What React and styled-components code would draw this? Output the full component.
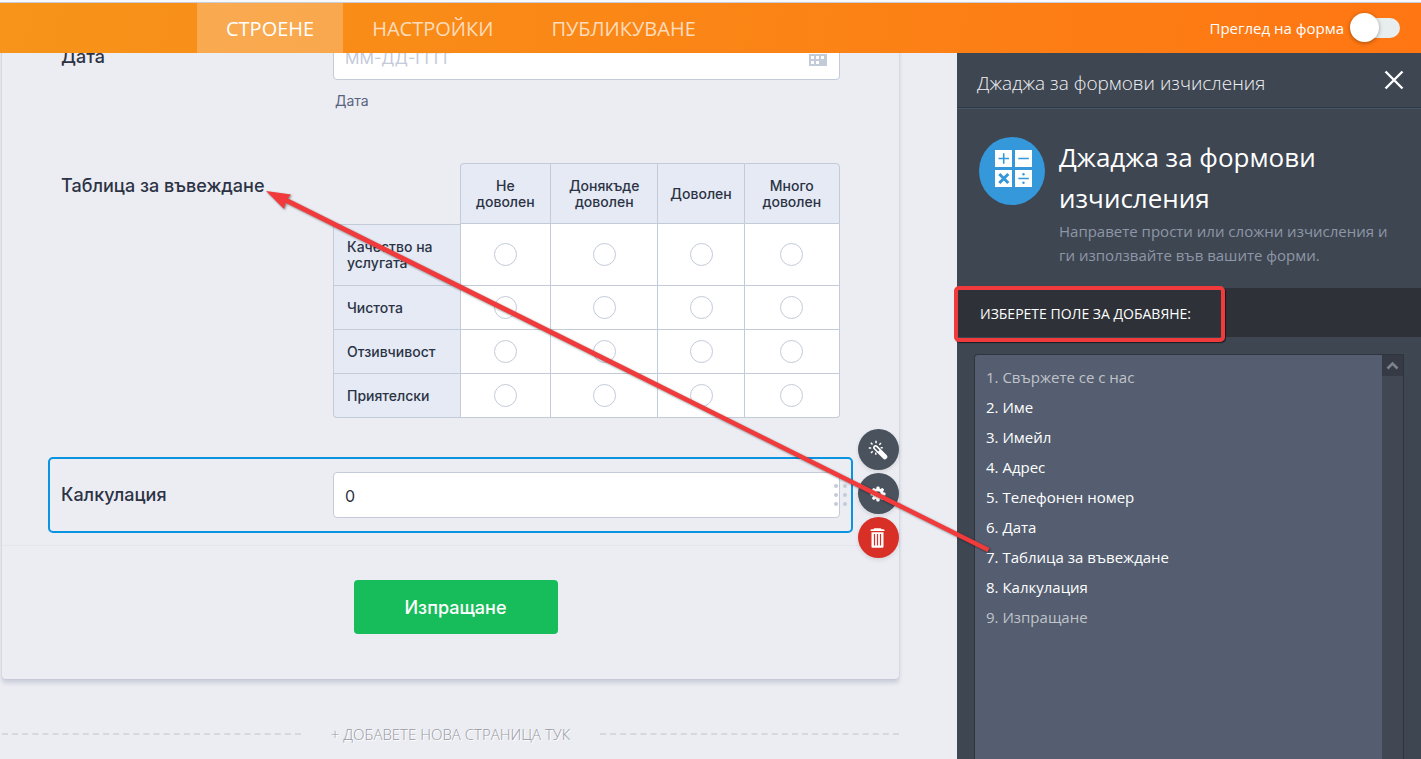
import React from "react";
import styled, { createGlobalStyle } from "styled-components";

const GlobalStyle = createGlobalStyle`
  * {
    box-sizing: border-box;
  }

  body {
    margin: 0;
    background: #ecedf3;
    font-family: "Open Sans", "Noto Sans", sans-serif;
  }

  button,
  input {
    font-family: inherit;
  }
`;

const Page = styled.div`
  position: relative;
  display: flex;
  flex-direction: column;
  height: 100vh;
  border-top: 2px solid #f8f9fc;
  overflow: hidden;
`;

const Header = styled.header`
  display: flex;
  flex: none;
  align-items: stretch;
  justify-content: space-between;
  height: 51px;
  padding-right: 21px;
  border-top: 1px solid #c9cdd8;
  background: linear-gradient(100deg, #f79419, #ff7613) padding-box;
`;

const Tabs = styled.nav`
  display: flex;
  padding-left: 197px;
`;

const Tab = styled.a`
  display: flex;
  align-items: center;
  padding: 0 29px;
  font-size: 20px;
  text-decoration: none;
  color: ${(props) => (props.$active ? "#fff" : "#fddcbb")};
  background: ${(props) =>
    props.$active ? "rgba(255, 255, 255, 0.24)" : "transparent"};
`;

const Preview = styled.label`
  display: flex;
  align-items: center;
  gap: 7px;
  color: #fff;
  font-size: 15px;
`;

const Toggle = styled.input`
  appearance: none;
  position: relative;
  width: 49px;
  height: 20px;
  margin: 0;
  border-radius: 10px;
  background: #e8edee;

  &::before {
    content: "";
    position: absolute;
    top: -5px;
    left: -1px;
    width: 29px;
    height: 29px;
    border-radius: 50%;
    background: #fff;
    box-shadow: 0 1px 4px rgba(0, 0, 0, 0.35);
  }
`;

const Content = styled.div`
  display: flex;
  flex: 1;
  min-height: 0;
`;

const Canvas = styled.main`
  flex: 1;
  min-width: 0;
  padding: 0 58px 0 2px;
  overflow: hidden;
`;

const Card = styled.form`
  margin-top: -34px;
  border-radius: 4px;
  background: #ecedf3;
  box-shadow: 0 4px 4px rgba(87, 100, 126, 0.22),
    0 0 2px rgba(87, 100, 126, 0.2);
  color: #2c3345;
  font-family: Inter, sans-serif;
`;

const Fields = styled.div`
  display: flex;
  flex-direction: column;
  gap: 24px;
  padding: 0 46px 12px;
`;

const Row = styled.div`
  position: relative;
  display: grid;
  grid-template-columns: 272px minmax(0, 1fr);
  padding: 13px 11px;
  border: 2px solid ${(props) => (props.$selected ? "#0a93e0" : "transparent")};
  border-radius: 5px;
`;

const Label = styled.label`
  font-size: 18px;
  font-weight: 500;
  line-height: 46px;
`;

const Field = styled.div`
  position: relative;
`;

const TextInput = styled.input`
  display: block;
  width: 100%;
  height: 46px;
  padding: 2px 11px 0;
  border: 1px solid #c3cad8;
  border-radius: 4px;
  background: #fff;
  color: #2c3345;
  font-size: 16px;

  &::placeholder {
    color: #c3cad8;
  }
`;

const CalendarIcon = styled.svg`
  position: absolute;
  top: 14px;
  right: 13px;
`;

const SubLabel = styled.div`
  margin-top: 11px;
  padding-left: 2px;
  color: #57647e;
  font-size: 14px;
  line-height: 20px;
  height: 18px;
`;

const Matrix = styled.table`
  width: 100%;
  table-layout: fixed;
  border-collapse: separate;
  border-spacing: 0;
  font-size: 14px;
  line-height: 16px;
`;

const ColHead = styled.th`
  height: 61px;
  padding: 0 10px;
  border: solid #c3cad8;
  border-width: 1px 0 1px 1px;
  background: #e5eaf4;
  font-weight: 500;

  &:nth-child(2) {
    border-top-left-radius: 4px;
  }

  &:last-child {
    border-right-width: 1px;
    border-top-right-radius: 4px;
  }
`;

const RowHead = styled.th`
  padding: 0 14px 0 13px;
  border: solid #c3cad8;
  border-width: 0 0 1px 1px;
  background: #e5eaf4;
  font-weight: 500;
  text-align: left;

  tr:first-child > & {
    border-top-width: 1px;
  }

  tr:last-child > & {
    border-bottom-left-radius: 4px;
  }
`;

const Cell = styled.td`
  height: ${(props) => (props.$tall ? 62 : 44)}px;
  padding: 0;
  border: solid #c3cad8;
  border-width: 0 0 1px 1px;
  background: #fff;
  text-align: center;

  &:last-child {
    border-right-width: 1px;
  }

  tr:last-child > &:last-child {
    border-bottom-right-radius: 4px;
  }
`;

const Radio = styled.input`
  appearance: none;
  display: block;
  width: 23px;
  height: 23px;
  margin: 0 auto;
  border: 1px solid #c3cad8;
  border-radius: 50%;
  background: #fff;
`;

const DragHandle = styled.svg`
  position: absolute;
  top: 24px;
  right: 3px;
`;

const RowActions = styled.div`
  position: absolute;
  top: -30px;
  right: -48px;
  display: flex;
  flex-direction: column;
  gap: 3px;
`;

const RoundButton = styled.button`
  display: flex;
  align-items: center;
  justify-content: center;
  width: 41px;
  height: 41px;
  padding: 0 2px 0 0;
  border: 0;
  border-radius: 50%;
  background: ${(props) => (props.$danger ? "#d83027" : "#49525d")};
  box-shadow: 0 2px 4px rgba(0, 0, 0, 0.1);
`;

const SubmitBar = styled.div`
  display: flex;
  justify-content: center;
  padding: 34px 0 45px 10px;
  border-top: 1px solid #e4e6ec;
`;

const Submit = styled.button`
  min-width: 204px;
  height: 54px;
  border: 0;
  border-radius: 4px;
  background: #18bd5b;
  color: #fff;
  font-size: 18px;
  font-weight: 500;
`;

const AddPage = styled.div`
  display: flex;
  align-items: center;
  gap: 30px;
  margin-top: 44px;

  &::before,
  &::after {
    content: "";
    flex: 1;
    border-top: 2px dashed #d5d8de;
  }
`;

const AddPageButton = styled.button`
  padding: 0;
  border: 0;
  background: none;
  color: #989ba1;
  font-size: 15px;
  font-weight: 300;
  line-height: 22px;
  text-shadow: 1px 1px 0 #fff;
`;

const Panel = styled.aside`
  display: flex;
  flex: none;
  flex-direction: column;
  width: 464px;
  background: #3e4652;
  color: #fff;
`;

const PanelHeader = styled.div`
  display: flex;
  align-items: center;
  justify-content: space-between;
  height: 55px;
  padding: 6px 17px 0 20px;
  border-bottom: 1px solid #303a46;
  box-shadow: 0 1px 0 #4a5564;
`;

const PanelTitle = styled.h2`
  margin: 0;
  color: #f0f1f3;
  font-size: 19px;
  font-weight: 300;
`;

const CloseButton = styled.button`
  display: flex;
  padding: 0 0 6px;
  border: 0;
  background: none;
`;

const Widget = styled.section`
  display: flex;
  gap: 14px;
  padding: 29px 24px 21px 22px;
`;

const WidgetIcon = styled.svg`
  flex: none;
`;

const WidgetName = styled.h1`
  margin: 0;
  font-size: 26px;
  font-weight: 400;
  line-height: 41px;
`;

const WidgetText = styled.p`
  margin: 0;
  color: #8e97a6;
  font-size: 15px;
  line-height: 24px;
`;

const PickerTitle = styled.h3`
  position: relative;
  margin: 0;
  padding: 2px 23px 0;
  background: #2e3238;
  font-size: 14px;
  font-weight: 400;
  line-height: 47px;
`;

const Highlight = styled.span`
  position: absolute;
  top: -2px;
  left: -3px;
  width: 271px;
  height: 56px;
  border: 4px solid #f03a3b;
  border-radius: 5px;
  box-shadow: 1px 1px 1px rgba(0, 0, 0, 0.6);
`;

const Picker = styled.div`
  display: flex;
  flex: 1;
  min-height: 0;
  margin: 17px 17px 0;
  border: 1px solid #2f343d;
  border-bottom: 0;
  border-radius: 4px 0 0 0;
  background: #545e70;
`;

const Options = styled.ul`
  flex: 1;
  margin: 0;
  padding: 7px 11px;
  list-style: none;
`;

const Option = styled.button`
  display: block;
  width: 100%;
  padding: 0;
  border: 0;
  background: none;
  color: #fff;
  font-size: 15px;
  line-height: 30px;
  text-align: left;

  &:disabled {
    color: #c0c3c9;
  }
`;

const ScrollTrack = styled.div`
  width: 21px;
  background: #424754;
`;

const ScrollUp = styled.button`
  display: flex;
  align-items: center;
  justify-content: center;
  width: 21px;
  height: 21px;
  padding: 0;
  border: 0;
  background: #353a44;
`;

const Arrow = styled.svg`
  position: absolute;
  top: -2px;
  left: 0;
  width: 100%;
  height: 100%;
  pointer-events: none;
  filter: drop-shadow(1px 1px 1px rgba(0, 0, 0, 0.45));
`;

const columns = [
  { name: "Не доволен", width: "17.8%" },
  { name: "Донякъде доволен", width: "21.2%" },
  { name: "Доволен", width: "17%" },
  { name: "Много доволен", width: "19%" }
];

const rows = ["Качество на услугата", "Чистота", "Отзивчивост", "Приятелски"];

const options = [
  { name: "Свържете се с нас", disabled: true },
  { name: "Име" },
  { name: "Имейл" },
  { name: "Адрес" },
  { name: "Телефонен номер" },
  { name: "Дата" },
  { name: "Таблица за въвеждане" },
  { name: "Калкулация" },
  { name: "Изпращане", disabled: true }
];

const WandIcon = () => (
  <svg width="20" height="20" viewBox="0 0 20 20" fill="none" stroke="#fff">
    <path d="M7.6 7.6L16.8 16.8" strokeWidth="5" strokeLinecap="round" />
    <path d="M7.6 7.6L10.4 10.4" stroke="#49525d" strokeWidth="1.7" strokeLinecap="round" />
    <path
      d="M8 0.8v2.4M2.8 2.8l1.7 1.7M0.8 8h2.4M13 3l-1.7 1.7M3 13l1.7-1.7M7.8 12.6v2.2M12.6 7.8h2.2"
      strokeWidth="1.5"
    />
  </svg>
);

const GearIcon = () => (
  <svg width="16" height="16" viewBox="0 0 16 16">
    <g fill="#fff">
      <circle cx="8" cy="8" r="5.7" />
      {[0, 45, 90, 135].map((angle) => (
        <rect
          key={angle}
          x="6.4"
          y="0.5"
          width="3.2"
          height="15"
          rx="1.2"
          transform={`rotate(${angle} 8 8)`}
        />
      ))}
    </g>
    <circle cx="8" cy="8" r="2.7" fill="#49525d" />
  </svg>
);

const TrashIcon = () => (
  <svg width="15" height="20" viewBox="0 0 15 20">
    <path
      d="M4.5 0.2h6q0.8 0 0.9 1h1.8q1.3 0 1.3 1v0.8H0.5V2.200q0-1 1.300-1h1.800q0.100-1 0.900-1z"
      fill="#fff"
    />
    <path d="M1.500 4.200h12v14.600q0 1-1 1h-10q-1 0-1-1z" fill="#fff" />
    <path d="M4.500 6v11.500M7.500 6v11.500M10.500 6v11.500" stroke="#d83027" strokeWidth="1.2" />
  </svg>
);

const CalcIcon = () => (
  <WidgetIcon width="66" height="68" viewBox="0 0 66 68">
    <ellipse cx="33" cy="34" rx="33" ry="34" fill="#3498db" />
    <path
      d="M16 13h17v17H16zM36 13h17v17H36zM16 33h17v17H16zM36 33h17v17H36z"
      fill="#fff"
    />
    <path
      d="M19.5 21.500h10.500M24.700 16.300v10.500M39.300 21.500h10.500M39.300 41.500h10.500"
      stroke="#3498db"
      strokeWidth="1.6"
    />
    <path d="M20.300 37l9 9M29.300 37l-9 9" stroke="#3498db" strokeWidth="3" />
    <circle cx="44.500" cy="37.300" r="1.200" fill="#3498db" />
    <circle cx="44.500" cy="45.700" r="1.200" fill="#3498db" />
  </WidgetIcon>
);

const RatingTable = () => (
  <Matrix aria-label="Таблица за въвеждане">
    <colgroup>
      <col style={{ width: "25%" }} />
      {columns.map((col) => (
        <col key={col.name} style={{ width: col.width }} />
      ))}
    </colgroup>
    <thead>
      <tr>
        <td></td>
        {columns.map((col) => (
          <ColHead key={col.name} scope="col">
            {col.name}
          </ColHead>
        ))}
      </tr>
    </thead>
    <tbody>
      {rows.map((row, i) => (
        <tr key={row}>
          <RowHead scope="row">{row}</RowHead>
          {columns.map((col) => (
            <Cell key={col.name} $tall={i === 0}>
              <Radio type="radio" name={"row" + i} aria-label={row + ": " + col.name} />
            </Cell>
          ))}
        </tr>
      ))}
    </tbody>
  </Matrix>
);

const FormCanvas = () => (
  <Canvas>
    <Card>
      <Fields>
        <Row>
          <Label htmlFor="date">Дата</Label>
          <Field>
            <TextInput id="date" placeholder="ММ-ДД-ГГГГ" />
            <CalendarIcon width="18" height="18" viewBox="0 0 18 18">
              <path d="M0 2h3V0h2v2h8V0h2v2h3v3H0zM0 6h18v12H0z" fill="#c3cad8" />
              <path
                d="M2 8h3v3H2zM7 8h3v3H7zM12 8h3v3h-3zM2 13h3v3H2zM7 13h3v3H7z"
                fill="#fff"
              />
            </CalendarIcon>
            <SubLabel>Дата</SubLabel>
          </Field>
        </Row>
        <Row>
          <Label as="div">Таблица за въвеждане</Label>
          <RatingTable />
        </Row>
        <Row $selected>
          <Label htmlFor="calc">Калкулация</Label>
          <TextInput id="calc" defaultValue="0" />
          <DragHandle width="14" height="24" viewBox="0 0 14 24" fill="#c3cad8">
            {[2, 11].map((x) =>
              [3, 12, 21].map((y) => <circle key={x + "-" + y} cx={x} cy={y} r="2" />)
            )}
          </DragHandle>
          <RowActions>
            <RoundButton type="button" aria-label="Съветник">
              <WandIcon />
            </RoundButton>
            <RoundButton type="button" aria-label="Настройки">
              <GearIcon />
            </RoundButton>
            <RoundButton type="button" aria-label="Изтриване" $danger>
              <TrashIcon />
            </RoundButton>
          </RowActions>
        </Row>
      </Fields>
      <SubmitBar>
        <Submit type="button">Изпращане</Submit>
      </SubmitBar>
    </Card>
    <AddPage>
      <AddPageButton type="button">+ ДОБАВЕТЕ НОВА СТРАНИЦА ТУК</AddPageButton>
    </AddPage>
  </Canvas>
);

const WidgetPanel = () => (
  <Panel>
    <PanelHeader>
      <PanelTitle>Джаджа за формови изчисления</PanelTitle>
      <CloseButton type="button" aria-label="Затвори">
        <svg width="20" height="20" viewBox="0 0 20 20">
          <path d="M1.5 1.5l17 17M18.5 1.5l-17 17" stroke="#fff" strokeWidth="2.4" />
        </svg>
      </CloseButton>
    </PanelHeader>
    <Widget>
      <CalcIcon />
      <div>
        <WidgetName>Джаджа за формови изчисления</WidgetName>
        <WidgetText>
          Направете прости или сложни изчисления и ги използвайте във вашите форми.
        </WidgetText>
      </div>
    </Widget>
    <PickerTitle>
      ИЗБЕРЕТЕ ПОЛЕ ЗА ДОБАВЯНЕ:
      <Highlight />
    </PickerTitle>
    <Picker>
      <Options>
        {options.map((option, i) => (
          <li key={option.name}>
            <Option type="button" disabled={option.disabled}>
              {i + 1 + ". " + option.name}
            </Option>
          </li>
        ))}
      </Options>
      <ScrollTrack>
        <ScrollUp type="button" aria-label="Нагоре">
          <svg width="13" height="9" viewBox="0 0 13 9">
            <path d="M1.500 7.500l5-5 5 5" fill="none" stroke="#7d828c" strokeWidth="2.600" />
          </svg>
        </ScrollUp>
      </ScrollTrack>
    </Picker>
  </Panel>
);

const App = () => (
  <Page>
    <GlobalStyle />
    <Header>
      <Tabs>
        <Tab href="#build" $active>
          СТРОЕНЕ
        </Tab>
        <Tab href="#settings">НАСТРОЙКИ</Tab>
        <Tab href="#publish">ПУБЛИКУВАНЕ</Tab>
      </Tabs>
      <Preview>
        Преглед на форма
        <Toggle type="checkbox" />
      </Preview>
    </Header>
    <Content>
      <FormCanvas />
      <WidgetPanel />
    </Content>
    <Arrow aria-hidden="true">
      <path d="M284 196.500L989.500 548L987.500 552L283 201.500z" fill="#f03a3b" />
      <path d="M266 191L291 194.500L286.500 200L284 209z" fill="#f03a3b" />
    </Arrow>
  </Page>
);

export default App;
